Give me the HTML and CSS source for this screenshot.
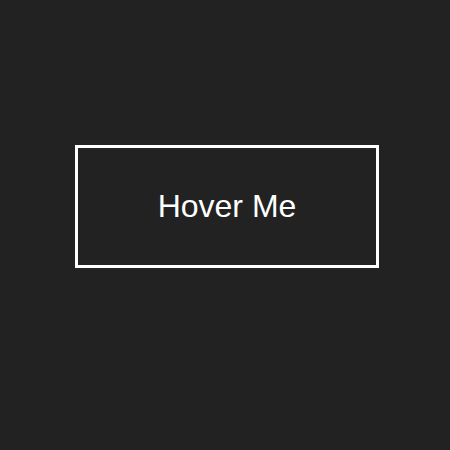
FILE: index.html
```html
<!DOCTYPE html>
<html>
<head>
<meta charset="utf-8">
<link rel="stylesheet" href="styles.css">
</head>
<body>
<div class="stage">
  <button class="hover-btn">Hover Me</button>
</div>
</body>
</html>
```

FILE: styles.css
```css
html, body {
  margin: 0;
  padding: 0;
  background: #222222;
  height: 100%;
}
.stage {
  display: flex;
  align-items: flex-start;
  padding: 145px 0 0 75px;
}
.hover-btn {
  font-family: "Liberation Sans", Arial, sans-serif;
  font-size: 32px;
  line-height: 37px;
  color: #ffffff;
  background: transparent;
  border: 3px solid #ffffff;
  padding: 40px 0;
  width: 304px;
  text-align: center;
  margin: 0;
  box-sizing: border-box;
  height: 123px;
  cursor: pointer;
}
```
